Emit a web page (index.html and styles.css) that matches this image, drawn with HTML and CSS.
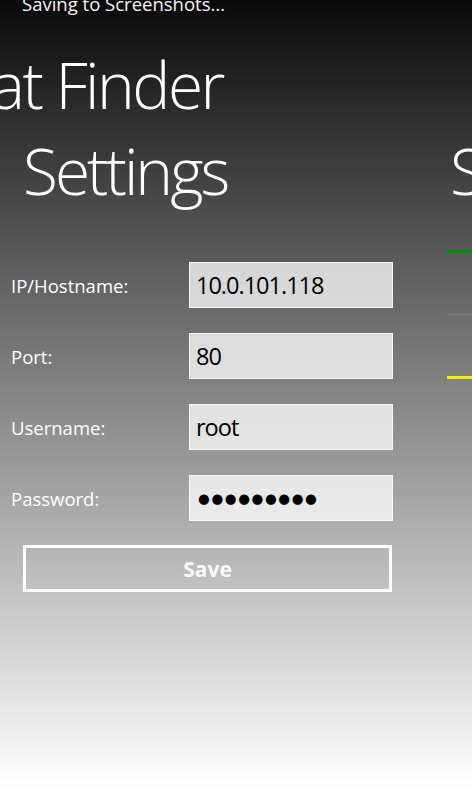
FILE: index.html
```html
<!DOCTYPE html>
<html lang="en">
<head>
    <meta charset="UTF-8">
    <meta name="viewport" content="width=device-width, initial-scale=1.0">
    <title>Finder Settings</title>
    <link rel="stylesheet" href="styles.css">
</head>
<body>
    <div class="system-tray">Saving to Screenshots...</div>
    <h1 class="pano-title">at Finder</h1>
    <div class="pano">
        <div class="pano-item settings">
            <h2 class="item-header">Settings</h2>
            <div class="settings-form">
                <label class="field-label">IP/Hostname:</label>
                <div class="text-box">10.0.101.118</div>
                <label class="field-label">Port:</label>
                <div class="text-box">80</div>
                <label class="field-label">Username:</label>
                <div class="text-box">root</div>
                <label class="field-label">Password:</label>
                <div class="text-box password">●●●●●●●●●</div>
            </div>
            <button class="save-button">Save</button>
        </div>
        <div class="pano-item status">
            <h2 class="item-header">S</h2>
            <div class="status-list">
                <div class="status-bar green"></div>
                <div class="status-bar grey"></div>
                <div class="status-bar yellow"></div>
            </div>
        </div>
    </div>
</body>
</html>
```

FILE: styles.css
```css
html, body {
    height: 100%;
}
body {
    margin: 0;
    overflow: hidden;
    font-family: "Open Sans", "Noto Sans", sans-serif;
    color: #fff;
    background: linear-gradient(to bottom, #0a0a0a 0%, #ffffff 100%);
}
.system-tray {
    font-size: 18.5px;
    line-height: 20px;
    margin-top: -6px;
    padding-left: 22px;
    color: #f2f2f2;
}
.pano-title {
    margin: 28px 0 0 -9px;
    font-size: 64px;
    font-weight: 300;
    line-height: 86px;
    letter-spacing: -2.5px;
    white-space: nowrap;
}
.pano {
    display: flex;
}
.pano-item {
    flex: none;
}
.settings {
    width: 436px;
    padding-left: 11px;
}
.item-header {
    margin: 0;
    font-size: 64px;
    font-weight: 300;
    line-height: 86px;
    letter-spacing: -3px;
    white-space: nowrap;
}
.settings .item-header {
    padding-left: 12px;
}
.settings-form {
    display: grid;
    grid-template-columns: 178px 204px;
    grid-auto-rows: 46px;
    row-gap: 25px;
    margin-top: 48px;
    align-items: center;
}
.field-label {
    font-size: 18.5px;
}
.text-box {
    box-sizing: border-box;
    height: 46px;
    padding: 0 6px;
    border: 1px solid rgba(255,255,255,0.75);
    background-color: rgba(255,255,255,0.75);
    color: #000;
    font-size: 23.5px;
    line-height: 44px;
    letter-spacing: -1px;
}
.text-box.password {
    padding-left: 8px;
    font-family: "DejaVu Sans", sans-serif;
    font-size: 13.5px;
    letter-spacing: 1.6px;
}
.save-button {
    display: block;
    box-sizing: border-box;
    width: 369px;
    height: 47px;
    margin: 24px 0 0 12px;
    border: 3px solid #fff;
    background: transparent;
    color: #fafafa;
    font-family: inherit;
    font-size: 21px;
    font-weight: 700;
}
.status .item-header {
    padding-left: 3px;
}
.status-list {
    display: flex;
    flex-direction: column;
    gap: 60px;
    margin-top: 36px;
}
.status-bar {
    width: 40px;
    height: 3px;
}
.status-bar.green {
    background-color: #008a00;
}
.status-bar.grey {
    background-color: #747474;
}
.status-bar.yellow {
    background-color: #f0f000;
}
```
